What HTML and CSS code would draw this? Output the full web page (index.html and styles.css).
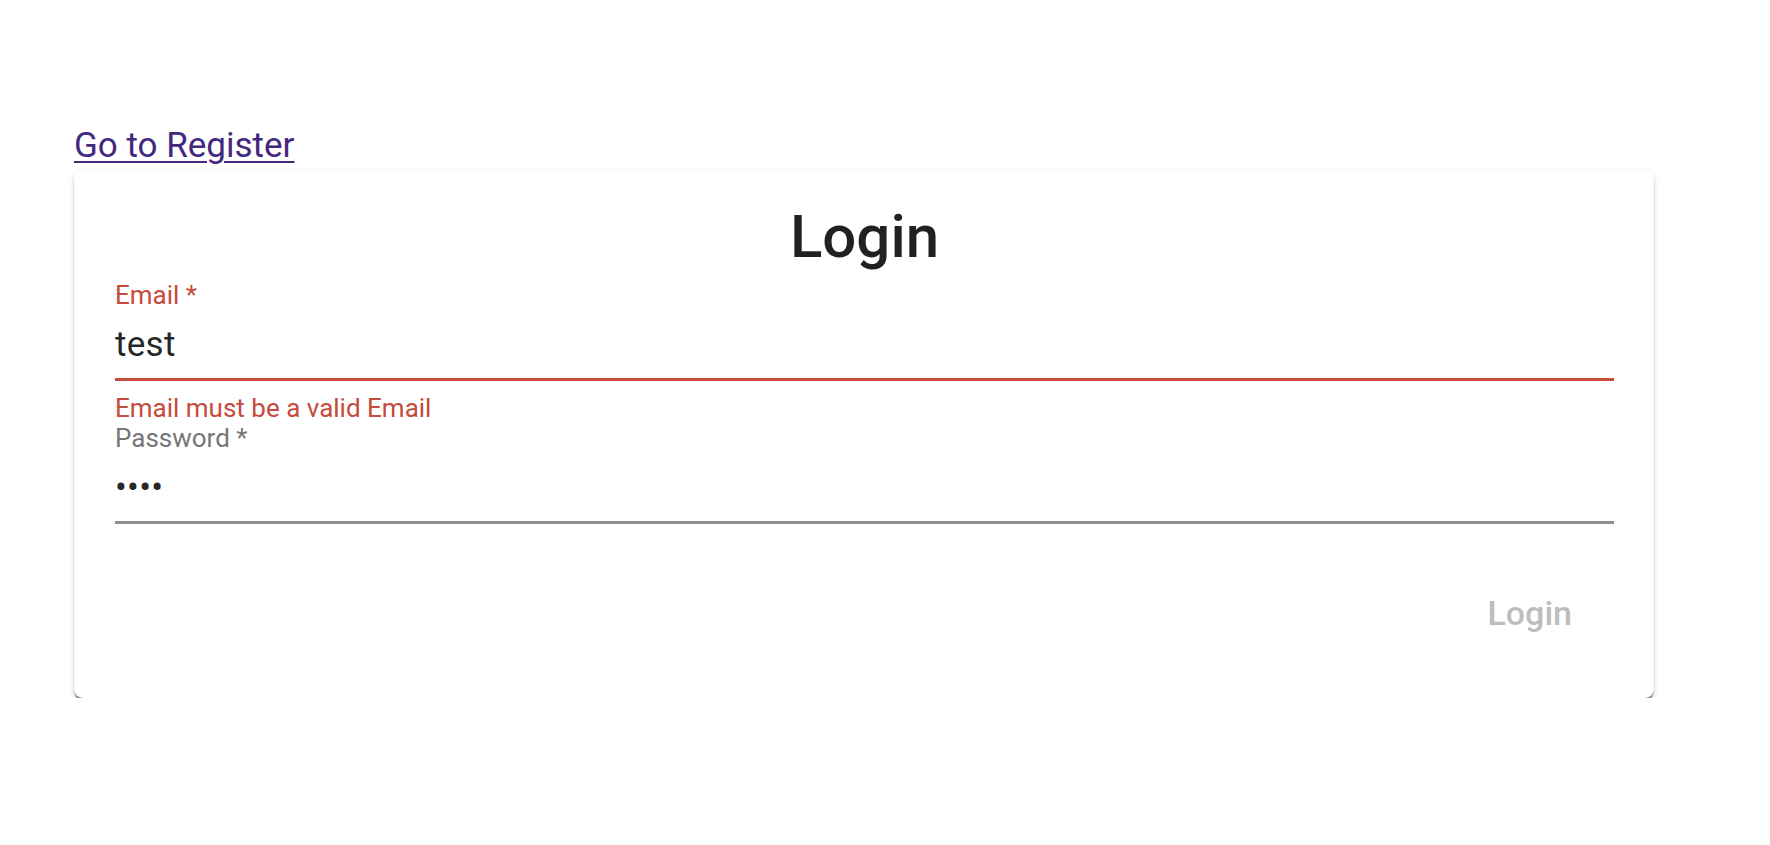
FILE: index.html
```html
<!DOCTYPE html>
<html lang="en">

<head>
    <meta charset="UTF-8">
    <meta name="viewport" content="width=device-width, initial-scale=1.0">
    <title>Login</title>
    <link rel="stylesheet" href="styles.css">
</head>

<body>
    <div class="page">
        <div class="nav-link">
            <a href="#register" class="register-link">Go to Register</a>
        </div>

        <form class="card" onsubmit="return false">
            <h1 class="card-title">Login</h1>

            <div class="field field-error">
                <label class="field-label" for="email">Email *</label>
                <div class="input-row">
                    <input id="email" class="field-input" type="text" value="test">
                </div>
                <p class="helper-text">Email must be a valid Email</p>
            </div>

            <div class="field">
                <label class="field-label" for="password">Password *</label>
                <div class="input-row">
                    <input id="password" class="field-input" type="password" value="test">
                </div>
            </div>

            <div class="actions">
                <button class="login-btn" type="submit" disabled>Login</button>
            </div>
        </form>
    </div>
</body>

</html>
```

FILE: styles.css
```css
body {
    margin: 0;
    font-family: Roboto, "Helvetica Neue", Arial, sans-serif;
    background: #ffffff;
    color: rgba(0, 0, 0, 0.87);
}

.page {
    padding: 125px 116px 0 74px;
}

.nav-link {
    line-height: 42px;
    font-size: 35px;
}

.register-link {
    color: #44287f;
    text-decoration: underline;
    text-decoration-thickness: 2px;
    text-underline-offset: 4px;
}

.card {
    margin-top: 4px;
    width: 1580px;
    box-sizing: border-box;
    padding: 30px 40px 50px 41px;
    background: #ffffff;
    border-radius: 9px;
    box-shadow: 0 4px 2px -1px rgba(0, 0, 0, 0.38),
        0 2px 2px 0 rgba(0, 0, 0, 0.16),
        0 2px 7px 0 rgba(0, 0, 0, 0.12);
}

.card-title {
    margin: 0 0 7px 0;
    text-align: center;
    font-size: 60px;
    line-height: 72px;
    font-weight: 500;
    color: rgba(0, 0, 0, 0.87);
}

.field-label {
    display: block;
    font-size: 26px;
    line-height: 30px;
    color: #767676;
}

.input-row {
    padding: 13px 0;
    border-bottom: 3px solid #8f8f8f;
}

.field-input {
    display: block;
    width: 100%;
    height: 42px;
    padding: 0;
    border: none;
    outline: none;
    background: transparent;
    font-family: inherit;
    font-size: 35px;
    letter-spacing: 0.3px;
    color: rgba(0, 0, 0, 0.87);
}

.field-error .field-label,
.helper-text {
    color: #c54b3c;
}

.field-error .input-row {
    padding-bottom: 13px;
    border-bottom: 3px solid #c54b3c;
}

.field-error .helper-text {
    margin-top: 12px;
}

.helper-text {
    margin: 13px 0 0 0;
    font-size: 26px;
    line-height: 30px;
}

.actions {
    display: flex;
    justify-content: flex-end;
    margin-top: 54px;
    padding-right: 17px;
}

.login-btn {
    padding: 15px 25px;
    border: none;
    background: transparent;
    font-family: inherit;
    font-size: 34px;
    line-height: 40px;
    font-weight: 500;
    color: #bdbdbd;
    cursor: default;
}
```
